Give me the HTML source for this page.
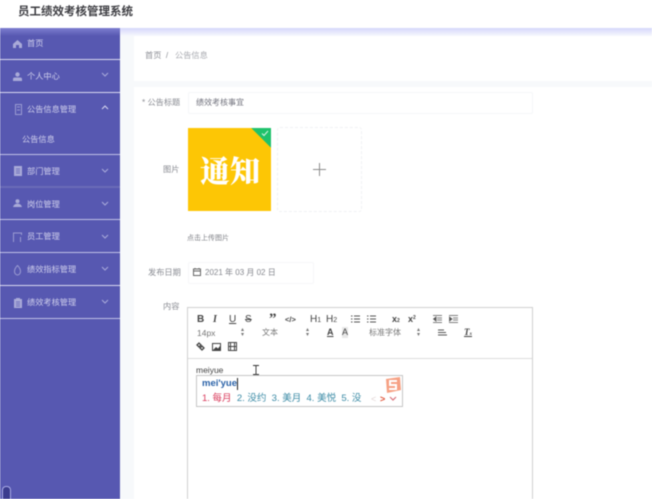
<!DOCTYPE html>
<html lang="zh"><head><meta charset="utf-8"><title>员工绩效考核管理系统</title>
<style>
*{box-sizing:border-box}
html,body{margin:0;padding:0;width:652px;height:499px;overflow:hidden;background:#fff;font-family:"Liberation Sans","Noto Sans CJK SC",sans-serif}
#w{position:relative;width:652px;height:499px;overflow:hidden;background:#fff;filter:blur(.4px)}
.a{position:absolute;white-space:nowrap}
.nav{color:#cfcfec;font-size:8.200px;line-height:12px;left:27px}
.d{position:absolute;left:0;width:120px;height:1px;background:#d9d9f0}
.ic{position:absolute;left:13px}
.ch{position:absolute;left:101px}
.lb{font-size:8.200px;line-height:12px;color:#8a8c93}
.tb{position:absolute;font-size:10px;line-height:11px;color:#444;font-weight:bold}
.sel{position:absolute;font-size:8px;line-height:10px;color:#777}
</style></head><body><div id="w">
<div class="a" style="left:18px;top:4px;font-size:11.500px;line-height:16px;font-weight:bold;color:#3d3d42">员工绩效考核管理系统</div>

<div class="a" style="left:120px;top:28px;width:532px;height:471px;background:#f7f9fb"></div>
<div class="a" style="left:120px;top:28px;width:532px;height:8px;background:linear-gradient(#d5d7fb,#f7f8fd)"></div>
<div class="a" style="left:134px;top:36px;width:518px;height:45px;background:#fff"></div>
<div class="a" style="left:134px;top:87px;width:518px;height:412px;background:#fff"></div>

<div class="a" style="left:0;top:28px;width:120px;height:471px;background:#5758b1"></div>
<div class="a" style="left:0;top:28px;width:120px;height:8px;background:linear-gradient(#7d7ed0,#5758b1)"></div>
<div class="d" style="top:59px"></div>
<div class="d" style="top:92px"></div>
<div class="d" style="top:154px;background:#c0c0e6"></div>
<div class="d" style="top:186px;height:2px;background:#6a6bb8"></div>
<div class="d" style="top:219px;background:#c0c0e6"></div>
<div class="d" style="top:252px;background:#c0c0e6"></div>
<div class="d" style="top:285px"></div>
<div class="d" style="top:318px;background:#c0c0e6"></div>

<div class="a nav" style="top:38px">首页</div>
<div class="a nav" style="top:71px">个人中心</div>
<div class="a nav" style="top:104px">公告信息管理</div>
<div class="a nav" style="top:134px;left:22px">公告信息</div>
<div class="a nav" style="top:166px">部门管理</div>
<div class="a nav" style="top:199px">岗位管理</div>
<div class="a nav" style="top:231px">员工管理</div>
<div class="a nav" style="top:264px">绩效指标管理</div>
<div class="a nav" style="top:297px">绩效考核管理</div>

<svg class="ic" style="top:40px" width="9" height="8" viewBox="0 0 9 8"><path d="M0 4 4.500 0 9 4V8H6V5H3V8H0Z" fill="#a9aad8"/></svg>
<svg class="ic" style="top:72px" width="9" height="9" viewBox="0 0 9 9"><circle cx="4.500" cy="2.500" r="2.200" fill="#a9aad8"/><path d="M0 9V7Q0 5.600 2 5.500H7Q9 5.600 9 7V9Z" fill="#a9aad8"/></svg>
<svg class="ic" style="top:104px;left:15px" width="7" height="11" viewBox="0 0 7 11"><rect x=".5" y=".5" width="6" height="10" fill="none" stroke="#9a9bd2"/><path d="M2 3H5M2 6H5" stroke="#9a9bd2"/></svg>
<svg class="ic" style="top:166px;left:14px" width="8" height="10" viewBox="0 0 8 10"><rect width="8" height="10" y="0" fill="#a9aad8"/><path d="M2 3H6M2 5H6M2 7H6" stroke="#6f70bd"/></svg>
<svg class="ic" style="top:199px" width="9" height="8" viewBox="0 0 9 8"><circle cx="4.500" cy="2.200" r="2" fill="#a9aad8"/><path d="M0 8Q1 4.600 4.500 4.600T9 8Z" fill="#a9aad8"/></svg>
<svg class="ic" style="top:232px" width="9" height="10" viewBox="0 0 9 10"><path d="M.5 10V1H8.500V3" fill="none" stroke="#9a9bd2"/><path d="M7.500 5V10" stroke="#9a9bd2"/></svg>
<svg class="ic" style="top:265px;left:14px" width="7" height="11" viewBox="0 0 7 11"><path d="M3.500.5C1.500 2.500 .5 4.500.5 6.500A3 3.500 0 0 0 6.500 6.500C6.500 4.500 5.500 2.500 3.500.5Z" fill="none" stroke="#9a9bd2"/></svg>
<svg class="ic" style="top:298px;left:14px" width="8" height="10" viewBox="0 0 8 10"><rect y="1" width="8" height="9" fill="#a9aad8"/><rect x="2" width="4" height="2" fill="#a9aad8"/><path d="M2 4H6M2 6H6M2 8H6" stroke="#6f70bd"/></svg>

<svg class="ch" style="top:72px" width="8" height="5" viewBox="0 0 8 5"><path d="M1 1 4 4 7 1" fill="none" stroke="#a9aadb"/></svg>
<svg class="ch" style="top:105px" width="8" height="5" viewBox="0 0 8 5"><path d="M1 4 4 1 7 4" fill="none" stroke="#d8d8f0"/></svg>
<svg class="ch" style="top:168px" width="8" height="5" viewBox="0 0 8 5"><path d="M1 1 4 4 7 1" fill="none" stroke="#a9aadb"/></svg>
<svg class="ch" style="top:201px" width="8" height="5" viewBox="0 0 8 5"><path d="M1 1 4 4 7 1" fill="none" stroke="#a9aadb"/></svg>
<svg class="ch" style="top:234px" width="8" height="5" viewBox="0 0 8 5"><path d="M1 1 4 4 7 1" fill="none" stroke="#a9aadb"/></svg>
<svg class="ch" style="top:266px" width="8" height="5" viewBox="0 0 8 5"><path d="M1 1 4 4 7 1" fill="none" stroke="#a9aadb"/></svg>
<svg class="ch" style="top:299px" width="8" height="5" viewBox="0 0 8 5"><path d="M1 1 4 4 7 1" fill="none" stroke="#a9aadb"/></svg>

<div class="a" style="left:2px;top:486px;width:9px;height:14px;background:#3b3c8e;border:1px solid #a9aae6;border-bottom:0;border-radius:4px 4px 0 0"></div>

<div class="a" style="left:145px;top:50px;font-size:8.200px;line-height:12px;color:#8d8f96">首页&nbsp;&nbsp;/&nbsp;&nbsp;&nbsp;<span style="color:#a8aab0">公告信息</span></div>

<div class="a lb" style="left:142px;top:97px">* 公告标题</div>
<div class="a" style="left:188px;top:92px;width:345px;height:22px;border:1px solid #f5f6f8;border-radius:2px"></div>
<div class="a" style="left:196px;top:97px;font-size:8px;line-height:12px;color:#70717c">绩效考核事宜</div>

<div class="a lb" style="left:163px;top:164px">图片</div>
<div class="a" style="left:188px;top:128px;width:83px;height:83px;background:#fdc605;overflow:hidden">
 <div class="a" style="left:12px;top:21px;font-family:'Noto Serif CJK SC','Liberation Serif',serif;font-weight:900;font-size:30px;line-height:40px;color:#fff">通知</div>
 <div class="a" style="left:63px;top:-14px;width:40px;height:28px;background:#1fc26b;transform:rotate(45deg)"></div>
 <svg class="a" style="left:73px;top:2px" width="8" height="7" viewBox="0 0 8 7"><path d="M1 3.500 3 5.500 7 1" fill="none" stroke="#d8f5e4"/></svg>
</div>
<div class="a" style="left:277px;top:127px;width:85px;height:85px;border:1px dashed #f0f1f4;border-radius:3px"></div>
<svg class="a" style="left:313px;top:163px" width="13" height="13" viewBox="0 0 13 13"><path d="M6.500 0V13M0 6.500H13" stroke="#8c8c8c"/></svg>
<div class="a" style="left:187px;top:234px;font-size:7px;line-height:10px;color:#808288">点击上传图片</div>

<div class="a lb" style="left:148px;top:267px">发布日期</div>
<div class="a" style="left:188px;top:262px;width:126px;height:22px;border:1px solid #f6f7f9;border-radius:2px"></div>
<svg class="a" style="left:193px;top:268px" width="8" height="8" viewBox="0 0 8 8"><rect x=".5" y="1" width="7" height="6.500" fill="none" stroke="#666"/><path d="M.5 3H7.500M2 0V1.500M6 0V1.500" stroke="#666"/></svg>
<div class="a" style="left:205px;top:267px;font-size:8px;line-height:12px;color:#85878e">2021 年 03 月 02 日</div>

<div class="a lb" style="left:163px;top:301px">内容</div>
<div class="a" style="left:187px;top:307px;width:346px;height:200px;border:1px solid #d0d0d0"></div>
<div class="a" style="left:188px;top:358px;width:344px;height:1px;background:#dcdcdc"></div>

<div class="tb" style="left:197px;top:314px">B</div>
<div class="tb" style="left:213px;top:314px;font-style:italic;font-family:'Liberation Serif',serif">I</div>
<div class="tb" style="left:229px;top:314px;font-weight:normal;text-decoration:underline">U</div>
<div class="tb" style="left:245px;top:314px;font-weight:normal;text-decoration:line-through">S</div>
<div class="tb" style="left:269px;top:314px;font-family:'Liberation Serif',serif;font-size:15px">”</div>
<div class="tb" style="left:285px;top:314px;font-size:7.500px;font-weight:bold">&lt;/&gt;</div>
<div class="tb" style="left:310px;top:314px;font-weight:normal">H<span style="font-size:7px">1</span></div>
<div class="tb" style="left:326px;top:314px;font-weight:normal">H<span style="font-size:7px">2</span></div>
<svg class="a" style="left:351px;top:315px" width="9" height="8" viewBox="0 0 9 8"><path d="M3 1H9M3 4H9M3 7H9M0 1H1.500M0 4H1.500M0 7H1.500" stroke="#555"/></svg>
<svg class="a" style="left:367px;top:315px" width="9" height="8" viewBox="0 0 9 8"><path d="M3 1H9M3 4H9M3 7H9M0 1H1.500M0 4H1.500M0 7H1.500" stroke="#555"/></svg>
<div class="tb" style="left:392px;top:314px;font-size:9px">x<span style="font-size:5px">2</span></div>
<div class="tb" style="left:408px;top:313px;font-size:9px">x<span style="font-size:5px;vertical-align:3px">2</span></div>
<svg class="a" style="left:433px;top:315px" width="9" height="8" viewBox="0 0 9 8"><path d="M0 .5H9M4 3H9M4 5H9M0 7.500H9M3 2 .5 4 3 6Z" stroke="#555" fill="#555" stroke-width=".8"/></svg>
<svg class="a" style="left:449px;top:315px" width="9" height="8" viewBox="0 0 9 8"><path d="M0 .5H9M4 3H9M4 5H9M0 7.500H9M.5 2 3 4 .5 6Z" stroke="#555" fill="#555" stroke-width=".8"/></svg>

<div class="sel" style="left:197px;top:328px;font-size:8.500px">14px</div>
<div class="sel" style="left:241px;top:328px;font-size:6px;line-height:5px">▴<br>▾</div>
<div class="sel" style="left:262px;top:328px">文本</div>
<div class="sel" style="left:306px;top:328px;font-size:6px;line-height:5px">▴<br>▾</div>
<div class="tb" style="left:327px;top:327px;font-size:9px;text-decoration:underline">A</div>
<div class="tb" style="left:342px;top:327px;font-size:9px;font-weight:normal;background:#e8e8e8">A</div>
<div class="sel" style="left:369px;top:328px">标准字体</div>
<div class="sel" style="left:417px;top:328px;font-size:6px;line-height:5px">▴<br>▾</div>
<svg class="a" style="left:438px;top:329px" width="9" height="8" viewBox="0 0 9 8"><path d="M0 1H6M0 3.500H8M0 6H9" stroke="#555"/></svg>
<div class="tb" style="left:464px;top:327px;font-size:9px;font-style:italic;font-family:'Liberation Serif',serif;text-decoration:underline">T<span style="font-size:5px">x</span></div>

<svg class="a" style="left:196px;top:342px" width="9" height="9" viewBox="0 0 9 9"><path d="M1 3 3 1 5 3 3 5ZM4 6 6 4 8 6 6 8Z" fill="none" stroke="#444" stroke-width="1.300"/></svg>
<svg class="a" style="left:212px;top:343px" width="9" height="8" viewBox="0 0 9 8"><rect x=".5" y=".5" width="8" height="7" fill="none" stroke="#444"/><path d="M1 7 4 4 6 5.500 8 3V7Z" fill="#444"/></svg>
<svg class="a" style="left:228px;top:342px" width="9" height="9" viewBox="0 0 9 9"><rect x=".5" y=".5" width="8" height="8" fill="none" stroke="#444"/><path d="M0 4.500H9M2.500 0V9M6.500 0V9" stroke="#444"/></svg>

<div class="a" style="left:196px;top:365px;font-size:8.500px;line-height:11px;color:#444">meiyue</div>
<svg class="a" style="left:253px;top:365px" width="6" height="10" viewBox="0 0 6 10"><path d="M0 .5H2.500L3 1 3.500 .5H6M3 1V9M0 9.500H2.500L3 9 3.500 9.500H6" fill="none" stroke="#333" stroke-width=".9"/></svg>

<div class="a" style="left:196px;top:375px;width:207px;height:32px;background:#fff;border:1px solid #c6c6c6"></div>
<div class="a" style="left:202px;top:378px;font-size:9.500px;line-height:12px;font-weight:bold;color:#2a62a8">mei'yue</div>
<div class="a" style="left:237px;top:378px;width:1px;height:12px;background:#222"></div>
<div class="a" style="left:202px;top:393px;font-size:9.500px;line-height:12px;color:#3a8aa5"><span style="color:#d9395a">1. 每月</span>&nbsp; 2. 没约&nbsp; 3. 美月&nbsp; 4. 美悦&nbsp; 5. 没</div>
<div class="a" style="left:371px;top:393px;font-size:9px;line-height:12px;color:#e2d6d6">&lt;</div>
<div class="a" style="left:380px;top:393px;font-size:9px;line-height:12px;font-weight:bold;color:#e0553a">&gt;</div>
<svg class="a" style="left:389px;top:396px" width="8" height="6" viewBox="0 0 8 6"><path d="M1 1 4 4 7 1" fill="none" stroke="#d9707a" stroke-width="1.200"/></svg>
<svg class="a" style="left:384px;top:376px" width="18" height="18" viewBox="0 0 18 18"><path d="M2 3 16 1 17 14 3 17Z" fill="#f6a184"/><path d="M13 5H6V9H12V13H5" fill="none" stroke="#fff" stroke-width="2"/></svg>
</div></body></html>
